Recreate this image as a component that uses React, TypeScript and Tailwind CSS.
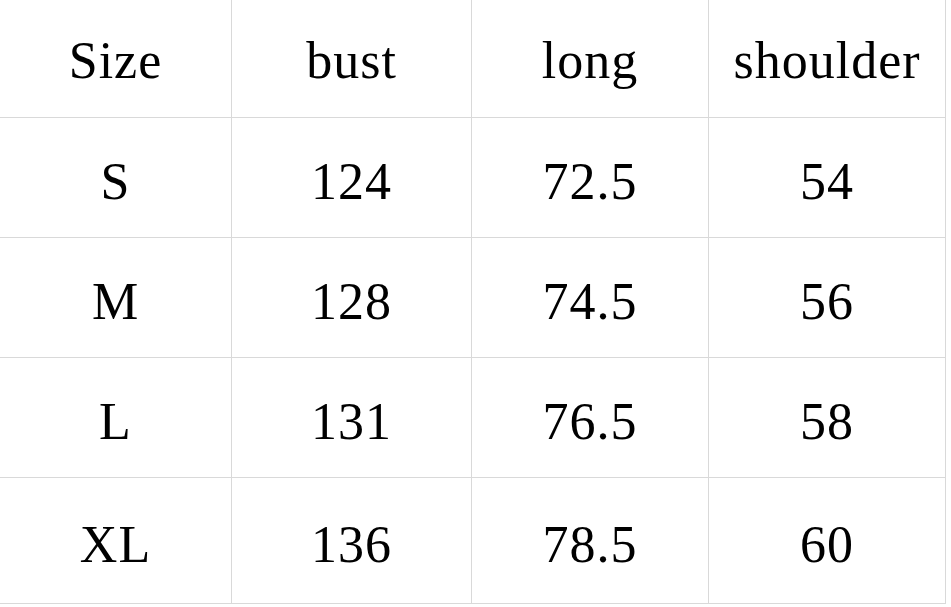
const header = ["Size", "bust", "long", "shoulder"];
const rows = [
  ["S", "124", "72.5", "54"],
  ["M", "128", "74.5", "56"],
  ["L", "131", "76.5", "58"],
  ["XL", "136", "78.5", "60"],
];

const colW = ["w-[232px]", "w-[240px]", "w-[237px]", "w-[237px]"];
const rowH = ["h-[118px] pt-[4px]", "h-[120px] pt-[8px]", "h-[120px] pt-[8px]", "h-[120px] pt-[8px]", "h-[126px] pt-[8px]"];

export default function App() {
  const all = [header, ...rows];
  return (
    <div
      className="w-[951px] h-[607px] bg-white text-black overflow-hidden"
      style={{ fontFamily: '"Liberation Serif", "Noto Sans CJK SC", serif' }}
    >
      <div className="flex flex-col w-[946px]">
        {all.map((r, i) => (
          <div key={i} className={`flex border-b border-[#d9d9d9] ${rowH[i].split(" ")[0]}`}>
            {r.map((c, j) => (
              <div
                key={j}
                className={`${colW[j]} ${rowH[i].split(" ")[1]} flex items-center justify-center border-r border-[#d9d9d9] text-[52px] leading-none tracking-[1px]`}
              >
                {c}
              </div>
            ))}
          </div>
        ))}
      </div>
    </div>
  );
}
